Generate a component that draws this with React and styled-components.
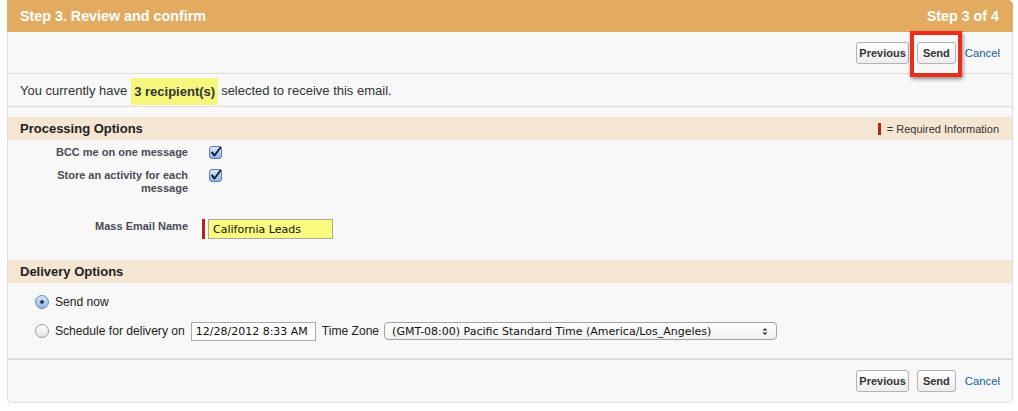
import React from 'react';
import styled, { createGlobalStyle } from 'styled-components';

const GlobalStyle = createGlobalStyle`
  body {
    margin: 0;
    background: #ffffff;
    font-family: "Liberation Sans", Arial, sans-serif;
  }
`

const Page = styled.div`
  width: 1006px;
  margin-left: 7px;
`

const StepHeader = styled.div`
  display: flex;
  justify-content: space-between;
  align-items: center;
  height: 32px;
  padding: 0 14px 0 13px;
  background: #e2ab5f;
  border-top-right-radius: 5px;
  color: #ffffff;
  font-weight: bold;
  font-size: 14.3px;
`

const Panel = styled.div`
  background: #f8f8f8;
  border: 1px solid #dddddd;
  border-top: none;
  border-radius: 0 0 5px 5px;
  box-shadow: 0 1px 1px rgba(0, 0, 0, 0.05);
`

const ButtonBar = styled.div`
  display: flex;
  justify-content: flex-end;
  align-items: center;
  gap: 8px;
  height: ${props => props.height}px;
  padding-right: 12px;
  border-${props => props.edge}: 1px solid #dcdcdc;
`

const Button = styled.button`
  box-sizing: border-box;
  min-width: 39px;
  height: 22px;
  padding: 0 2px;
  border: 1px solid #b3b3b3;
  border-radius: 3px;
  background: linear-gradient(#ffffff, #ececec);
  color: #333333;
  font-family: "Liberation Sans", Arial, sans-serif;
  font-weight: bold;
  font-size: 11px;
`

const Marked = styled.span`
  position: relative;
  display: inline-flex;

  &::after {
    content: "";
    position: absolute;
    top: -11px;
    left: -7px;
    right: -6px;
    bottom: -13px;
    border: 4px solid #ec2c18;
    box-shadow: 1px 2px 4px rgba(0, 0, 0, 0.45);
    pointer-events: none;
  }
`

const CancelLink = styled.a`
  margin-left: 1px;
  color: #0b5fa5;
  font-size: 11.3px;
  text-decoration: none;
`

const Recipients = styled.div`
  display: flex;
  align-items: center;
  height: 32px;
  padding-left: 12px;
  border-bottom: 1px solid #dcdcdc;
  color: #333333;
  font-size: 13px;
`

const Highlight = styled.span`
  display: inline-block;
  margin: 3px 3px 0 4px;
  padding: 0 3px;
  line-height: 27px;
  background: #f6f67c;
  font-weight: bold;
`

const SectionHeader = styled.div`
  display: flex;
  justify-content: space-between;
  align-items: center;
  height: 23px;
  margin-top: ${props => props.top}px;
  padding: 0 13px 0 12px;
  background: #f5e5d3;
  color: #222222;
  font-weight: bold;
  font-size: 13px;
`

const Legend = styled.span`
  display: flex;
  align-items: center;
  gap: 6px;
  font-weight: normal;
  font-size: 11px;
  color: #333333;
`

const RequiredBar = styled.span`
  display: inline-block;
  width: 3px;
  height: ${props => props.tall ? 20 : 12}px;
  background: #b3261a;
`

const FieldRow = styled.div`
  display: grid;
  grid-template-columns: 180px 1fr;
  column-gap: 14px;
  margin-top: ${props => props.top}px;
`

const Label = styled.div`
  padding-left: 40px;
  padding-top: ${props => props.pad || 0}px;
  text-align: right;
  color: #4a4a56;
  font-weight: bold;
  font-size: 11px;
  line-height: 13px;
`

const Data = styled.div`
  display: flex;
  align-items: flex-start;
  gap: 3px;
  padding-left: ${props => props.indent || 0}px;
`

const TextInput = styled.input`
  box-sizing: border-box;
  width: ${props => props.w}px;
  height: ${props => props.h || 20}px;
  padding: 0 4px;
  border: 1px solid #a9a9a9;
  background: ${props => props.yellow ? '#fbfb7e' : '#ffffff'};
  color: #111111;
  font-family: "DejaVu Sans", Verdana, sans-serif;
  font-size: 11px;
  outline: none;
`

const DeliveryBody = styled.div`
  display: flex;
  flex-direction: column;
  gap: 9px;
  padding: 9px 0 17px 27px;
  border-bottom: 1px solid #dcdcdc;
`

const RadioRow = styled.div`
  display: flex;
  align-items: center;
  gap: 6px;
  height: 20px;
  color: #222222;
  font-size: 12.1px;
`

const Select = styled.div`
  display: flex;
  justify-content: space-between;
  align-items: center;
  box-sizing: border-box;
  width: 393px;
  height: 18px;
  margin-left: -1px;
  padding: 0 8px 0 7px;
  border: 1px solid #a3a3a3;
  border-radius: 4px;
  background: linear-gradient(#ffffff, #efefef);
  color: #111111;
  font-family: "DejaVu Sans", Verdana, sans-serif;
  font-size: 11px;
`

const Checkbox = () => (
  <svg width="13" height="13" viewBox="0 0 13 13">
    <defs>
      <linearGradient id="cb" x1="0" y1="0" x2="0" y2="1">
        <stop offset="0" stopColor="#dbe9f8" />
        <stop offset="1" stopColor="#8db5e6" />
      </linearGradient>
    </defs>
    <rect x="0.5" y="0.5" width="12" height="12" rx="2.5" fill="url(#cb)" stroke="#5d7ea8" />
    <path d="M3 6.5 L5.5 9.5 L11.5 1.5" fill="none" stroke="#16243a" strokeWidth="2" strokeLinecap="round" strokeLinejoin="round" />
  </svg>
)

const Radio = ({ on }) => (
  <svg width="14" height="14" viewBox="0 0 14 14">
    <defs>
      <linearGradient id="rOn" x1="0" y1="0" x2="0" y2="1">
        <stop offset="0" stopColor="#d6e6f8" />
        <stop offset="1" stopColor="#8cb4e4" />
      </linearGradient>
      <linearGradient id="rOff" x1="0" y1="0" x2="0" y2="1">
        <stop offset="0" stopColor="#ffffff" />
        <stop offset="1" stopColor="#e4e4e4" />
      </linearGradient>
    </defs>
    <circle cx="7" cy="7" r="6.5" fill={on ? 'url(#rOn)' : 'url(#rOff)'} stroke={on ? '#6b8db8' : '#9a9a9a'} />
    {on && <circle cx="7" cy="7" r="1.8" fill="#1a2638" />}
  </svg>
)

const Arrows = () => (
  <svg width="6" height="9" viewBox="0 0 6 9">
    <path d="M0.5 3.5 L3 1 L5.5 3.5 Z M0.5 5.5 L3 8 L5.5 5.5 Z" fill="#333333" />
  </svg>
)

const App = () => {
  return (
    <Page>
      <GlobalStyle />
      <StepHeader>
        <span>Step 3. Review and confirm</span>
        <span>Step 3 of 4</span>
      </StepHeader>
      <Panel>
        <ButtonBar height={41} edge="bottom">
          <Button>Previous</Button>
          <Marked><Button>Send</Button></Marked>
          <CancelLink href="#">Cancel</CancelLink>
        </ButtonBar>
        <Recipients>
          You currently have<Highlight>3 recipient(s)</Highlight>selected to receive this email.
        </Recipients>

        <SectionHeader top={10}>
          <span>Processing Options</span>
          <Legend><RequiredBar />= Required Information</Legend>
        </SectionHeader>
        <FieldRow top={6}>
          <Label>BCC me on one message</Label>
          <Data indent={7}><Checkbox /></Data>
        </FieldRow>
        <FieldRow top={10}>
          <Label>Store an activity for each message</Label>
          <Data indent={7}><Checkbox /></Data>
        </FieldRow>
        <FieldRow top={24}>
          <Label pad={1}>Mass Email Name</Label>
          <Data>
            <RequiredBar tall />
            <TextInput w={125} yellow defaultValue="California Leads" />
          </Data>
        </FieldRow>

        <SectionHeader top={21}>
          <span>Delivery Options</span>
        </SectionHeader>
        <DeliveryBody>
          <RadioRow>
            <Radio on />
            <span>Send now</span>
          </RadioRow>
          <RadioRow>
            <Radio />
            <span>Schedule for delivery on</span>
            <TextInput w={125} h={19} defaultValue="12/28/2012 8:33 AM" />
            <span>Time Zone</span>
            <Select>
              <span>(GMT-08:00) Pacific Standard Time (America/Los_Angeles)</span>
              <Arrows />
            </Select>
          </RadioRow>
        </DeliveryBody>
        <ButtonBar height={42} edge="top">
          <Button>Previous</Button>
          <Button>Send</Button>
          <CancelLink href="#">Cancel</CancelLink>
        </ButtonBar>
      </Panel>
    </Page>
  )
}

export default App;
